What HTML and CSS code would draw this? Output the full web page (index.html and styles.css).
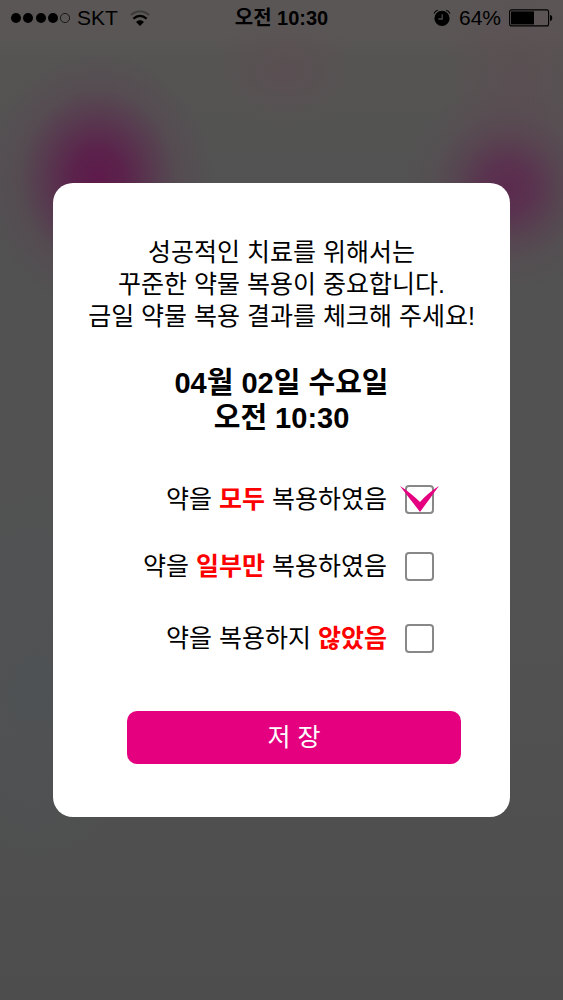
FILE: index.html
```html
<!DOCTYPE html>
<html lang="ko">
<head>
  <meta charset="UTF-8">
  <meta name="viewport" content="width=device-width, initial-scale=1.0">
  <link rel="stylesheet" href="styles.css">
  <title>복약 체크</title>
</head>
<body>
  <header class="status">
    <div class="status_left">
      <svg class="signal" width="60" height="12" viewBox="0 0 60 12">
        <circle cx="6" cy="6" r="5"/>
        <circle cx="18" cy="6" r="5"/>
        <circle cx="31" cy="6" r="5"/>
        <circle cx="43" cy="6" r="5"/>
        <circle cx="55" cy="6" r="4.6" fill="none" stroke="#000" stroke-width="0.7"/>
      </svg>
      <span>SKT</span>
      <svg class="wifi" width="20" height="17" viewBox="0 0 20 17">
        <path d="M0.8 5.2C6 0.2 14 0.2 19.2 5.2" fill="none" stroke="#3a3838" stroke-width="1.8"/>
        <path d="M3.4 8.8C7.2 5 12.8 5 16.6 8.8" fill="none" stroke="#000" stroke-width="2.2"/>
        <path d="M6 12C8.5 9.6 11.500 9.6 14 12L10 16Z"/>
      </svg>
    </div>
    <div class="status_time">오전 10:30</div>
    <div class="status_right">
      <svg class="alarm" width="18" height="18" viewBox="0 0 18 18">
        <circle cx="9" cy="9.4" r="7.6"/>
        <path d="M1 4.6C1.6 3 3 1.8 4.8 1.3M17 4.6C16.4 3 15 1.8 13.2 1.3" fill="none" stroke="#000" stroke-width="1.1"/>
        <path d="M9.2 5.2V10H5.4" fill="none" stroke="#4a4848" stroke-width="1.3"/>
      </svg>
      <span>64%</span>
      <svg class="battery" width="44" height="18" viewBox="0 0 44 18">
        <rect x="0.6" y="0.9" width="39" height="16" rx="2" fill="none" stroke="#000" stroke-width="1.1"/>
        <rect x="2" y="2.4" width="23" height="13"/>
        <path d="M41 6C44 6 44 12 41 12Z"/>
      </svg>
    </div>
  </header>

  <main class="wrap">
    <form class="popup">
      <p class="guide">성공적인 치료를 위해서는<br>꾸준한 약물 복용이 중요합니다.<br>금일 약물 복용 결과를 체크해 주세요!</p>
      <h1 class="date">04월 02일 수요일<br>오전 10:30</h1>

      <ul class="check_list">
        <li>
          <label for="all">약을 <strong>모두</strong> 복용하였음</label>
          <span class="box">
            <input type="checkbox" id="all" name="all" checked>
            <svg class="mark" width="40" height="26" viewBox="0 0 40 26"><path d="M0 0C6 8 14 18 20 26C26 18 33 8 39 0C31 5 25 10 20 16C14 10 8 5 0 0Z"/></svg>
          </span>
        </li>
        <li>
          <label for="part">약을 <strong>일부만</strong> 복용하였음</label>
          <span class="box">
            <input type="checkbox" id="part" name="part">
            <svg class="mark" width="40" height="26" viewBox="0 0 40 26"><path d="M0 0C6 8 14 18 20 26C26 18 33 8 39 0C31 5 25 10 20 16C14 10 8 5 0 0Z"/></svg>
          </span>
        </li>
        <li>
          <label for="none">약을 복용하지 <strong>않았음</strong></label>
          <span class="box">
            <input type="checkbox" id="none" name="none">
            <svg class="mark" width="40" height="26" viewBox="0 0 40 26"><path d="M0 0C6 8 14 18 20 26C26 18 33 8 39 0C31 5 25 10 20 16C14 10 8 5 0 0Z"/></svg>
          </span>
        </li>
      </ul>

      <button type="button" class="save">저 장</button>
    </form>
  </main>
</body>
</html>
```
FILE: styles.css
```css
*{
  box-sizing:border-box;
}
body,h1,p,ul,li{
  margin:0; padding:0; list-style:none;
}

body{
  min-height:100vh; display:flex; flex-direction:column;
  font-family:"Liberation Sans", "Noto Sans CJK KR", sans-serif; color:#000;
  background:
    radial-gradient(ellipse 115px 130px at 98px 178px, #5e1a4b 0%, rgba(92,28,75,0.88) 22%, rgba(92,34,76,0.55) 45%, rgba(92,50,78,0.22) 68%, rgba(92,70,80,0) 100%),
    radial-gradient(ellipse 105px 105px at 508px 188px, rgba(92,40,78,0.95) 0%, rgba(92,42,78,0.75) 25%, rgba(92,50,78,0.4) 50%, rgba(92,64,80,0.18) 72%, rgba(92,76,82,0) 100%),
    radial-gradient(ellipse 80px 55px at 285px 72px, rgba(94,76,82,0.6), rgba(94,76,82,0)),
    radial-gradient(ellipse 90px 110px at 520px 80px, rgba(94,76,82,0.6), rgba(94,76,82,0)),
    radial-gradient(ellipse 110px 200px at 35px 680px, rgba(78,82,85,0.8), rgba(78,82,85,0)),
    linear-gradient(#5a5656 0, #5a5656 36px, #555453 60px, #525252 20%, #525252 60%, #4d4d4d);
}

/* status bar */
.status{
  display:grid; grid-template-columns:1fr auto 1fr; align-items:center;
  height:36px; padding:0 10px; font-size:20px; line-height:36px;
}
.status_left,.status_right{
  display:flex; align-items:center; font-size:21px;
}
.status_left{
  gap:7px;
}
.status_right{
  justify-content:flex-end; gap:8px;
}
.wifi{
  margin-left:5px;
}
.status_time{
  font-weight:bold;
}

/* popup */
.wrap{
  flex:1; display:flex; align-items:center; padding:0 53px 36px;
}
.popup{
  width:100%; padding:53px 0; border-radius:20px; background:#fff;
}
.guide{
  font-size:25px; line-height:32px; text-align:center;
}
.date{
  margin-top:34px; font-size:29px; line-height:35px; text-align:center;
}

.check_list{
  display:grid; grid-template-rows:67px 72px 29px; align-items:start;
  margin-top:49px; padding-right:76px;
}
.check_list li{
  display:flex; justify-content:flex-end; align-items:center; gap:18px;
  height:29px; font-size:25px; line-height:29px;
}
.check_list strong{
  color:#f00;
}
.box{
  position:relative; display:flex;
}
.box input{
  appearance:none; width:29px; height:29px; margin:0;
  border:2px solid #888; border-radius:4px; background:#fff;
}
.mark{
  display:none; position:absolute; left:-5px; top:1px; fill:#e4007f; pointer-events:none;
}
.box input:checked + .mark{
  display:block;
}

.save{
  display:block; width:calc(100% - 123px); height:53px; margin:58px 49px 0 74px; padding:0;
  border:0; border-radius:10px; background:#e4007f;
  color:#fff; font-family:inherit; font-size:25px; line-height:53px;
}
```
